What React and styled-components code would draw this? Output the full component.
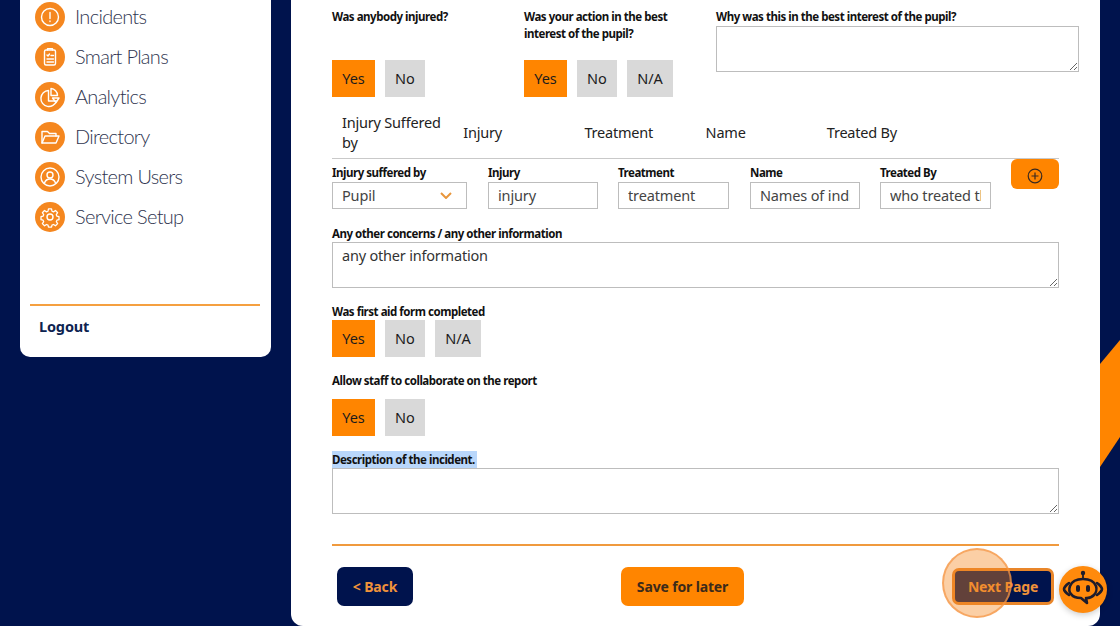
import React from 'react';
import styled, { createGlobalStyle } from 'styled-components';

const Global = createGlobalStyle`
  html, body { margin: 0; padding: 0; height: 626px; overflow: hidden; background: #00134d; }
  * { box-sizing: border-box; }
`;
const font = `"Noto Sans", "Liberation Sans", sans-serif`;
const Page = styled.div`
  position: relative; width: 1120px; height: 626px; overflow: hidden; background: #00134d;
  display: flex; align-items: flex-start; padding-left: 20px; gap: 20px; font-family: ${font};
`;
const Stripe = styled.svg`position: absolute; left: 1100px; top: 340px; width: 20px; height: 130px;`;
const Sidebar = styled.aside`
  width: 251px; height: 357px; background: #fff; border-radius: 0 0 10px 10px; padding: 0 11px 0 10px;
  display: flex; flex-direction: column;
`;
const Nav = styled.nav`display: flex; flex-direction: column; gap: 10px; height: 320px; border-bottom: 2px solid #f5a040; margin-top: -14px; padding-top: 16px; transform: none;`;
const NavItem = styled.a`
  display: flex; align-items: center; gap: 10px; height: 30px; padding-left: 5px; margin-top: ${p => p.$top || 0}px;
  font-family: Lato, sans-serif; font-weight: 300; font-size: 20px; letter-spacing: -0.7px; color: #2f3550;
`;
const NavText = styled.span`margin-top: -2px;`;
const IconDisc = styled.span`
  width: 30px; height: 30px; border-radius: 50%; background: #f5871f; display: flex; align-items: center; justify-content: center; flex: none;
  svg { width: 24px; height: 24px; fill: none; stroke: #fff; stroke-width: 1.4; stroke-linecap: round; stroke-linejoin: round; }
`;
const Logout = styled.a`font-size: 14.5px; font-weight: 700; color: #0d2350; padding: 10px 0 0 9px; line-height: 20px; letter-spacing: -0.15px;`;
const Main = styled.main`
  width: 809px; height: 626px; background: #fff; border-radius: 0 0 12px 12px; padding: 8px 41px 0; 
  display: flex; flex-direction: column; flex: none;
`;
const TopRow = styled.div`display: grid; grid-template-columns: 192px 192px 363px; height: 89px;`;
const Question = styled.div`display: flex; flex-direction: column; justify-content: space-between;`;
const Label = styled.label`
  display: block; font-size: 11.5px; font-weight: 700; line-height: 17px; color: #111; letter-spacing: -0.47px; white-space: nowrap;
`;
const SelLabel = styled(Label)`background: #b9d7fb; width: 145px;`;
const Choices = styled.div`display: flex; gap: 10px; margin-top: ${p => p.$top || 0}px;`;
const Choice = styled.button`
  height: 37px; width: ${p => p.$w}px; border: 0; padding: 0 0 2px; font-family: ${font}; font-size: 14.5px; color: #1c1c1c;
  background: ${p => (p.$on ? '#ff8500' : '#d9d9d9')};
`;
const Area = styled.textarea`
  display: block; width: 100%; height: ${p => p.$h || 46}px; border: 1px solid #bdbdbd; padding: 2px 9px; margin: ${p => p.$top || 0}px 0 0;
  font-family: ${font}; font-size: 14.5px; letter-spacing: -0.2px; color: #333; outline: 0; border-radius: 0; background: #fff;
`;
const TableHead = styled.div`
  display: grid; grid-template-columns: repeat(5, 121.2px); height: 54px; margin-top: 8px; border-bottom: 1px solid #c9c9c9; align-items: center;
`;
const HeadCell = styled.div`font-size: 14.5px; line-height: 20px; color: #222; padding: 0 10px; letter-spacing: -0.2px;`;
const EntryRow = styled.div`display: flex; align-items: flex-start; height: 51px;`;
const Field = styled.div`
  display: flex; flex-direction: column; width: ${p => p.$w}px; margin-left: ${p => p.$gap || 0}px; padding-top: 5px; row-gap: 1px;
`;
const Input = styled.input`
  width: 100%; height: 27px; border: 1px solid #bdbdbd; padding: 0 9px 2px; font-family: ${font}; font-size: 14.5px; letter-spacing: -0.15px; color: #444; background: #fff; outline: 0; border-radius: 0;
`;
const SelectBox = styled.div`
  height: 27px; border: 1px solid #bdbdbd; padding: 0 9px 2px; font-size: 14.5px; color: #444; letter-spacing: -0.15px; display: flex; align-items: center; justify-content: space-between;
  svg { width: 12px; height: 7px; margin-right: 5px; margin-top: 2px; fill: none; stroke: #e8963c; stroke-width: 2; }
`;
const AddButton = styled.button`
  width: 48px; height: 30px; margin-left: 20px; border: 0; border-radius: 6px; background: #ff8500; padding: 7px 0 0;
  svg { width: 16px; height: 16px; fill: none; stroke: #3a2a20; stroke-width: 1.2; }
`;
const Block = styled.section`margin-top: ${p => p.$top}px;`;
const Rule = styled.hr`margin: 30px 0 0; border: 0; height: 2px; background: #f09a3e;`;
const Footer = styled.div`display: flex; justify-content: space-between; align-items: center; padding: 21px 5px 0; height: 60px;`;
const Action = styled.button`
  height: ${p => p.$h || 39}px; width: ${p => p.$w}px; border-radius: 7px; font-family: ${font}; font-weight: 700; font-size: 14px; letter-spacing: -0.15px; padding: 0;
  background: ${p => (p.$light ? '#ff8500' : '#00134d')};
  color: ${p => (p.$light ? '#3c2a1a' : '#f0923a')};
  border: ${p => (p.$border ? '3px solid #e9862a' : '0')};
`;
const Ripple = styled.span`
  position: absolute; left: 942px; top: 548px; width: 70px; height: 70px; border-radius: 50%;
  background: rgba(245, 135, 31, .4); border: 2px solid rgba(245,150,70,.7); pointer-events: none;
`;
const Bot = styled.span`
  position: absolute; left: 1059px; top: 566px; width: 48px; height: 47px; border-radius: 50%; background: #ff8a0c;
  display: flex; align-items: center; justify-content: center; box-shadow: 0 2px 6px rgba(0,0,0,.2);
  svg { width: 48px; height: 47px; }
`;

const icons = {
  alert: <><circle cx="12" cy="12" r="8.5" /><path d="M12 7.5v6M12 16v.6" /></>,
  plan: <><rect x="6.5" y="5" width="11" height="15" rx="1.5" /><path d="M9.5 5V3.8h5V5M9 10l1 1 1.5-2M13 10.5h2.5M9 14h6.5M9 17h6.5" /></>,
  pie: <><path d="M10.5 5.5a8 8 0 1 0 8 10.5h-8z" /><path d="M13 3.5a7 7 0 0 1 6.5 7H13z" /><path d="M14.5 13H21l-3 4.5z" /></>,
  folder: <><path d="M4 18V6.5h5.5l2 2H18V11" /><path d="M4 18l3-7h14l-3 7z" /></>,
  user: <><circle cx="12" cy="12" r="9" /><circle cx="12" cy="10" r="3" /><path d="M6.5 18c1-3 3-4 5.500-4s4.500 1 5.500 4" /></>,
  gear: <><circle cx="12" cy="12" r="3" /><path d="M10.300 3h3.400l.5 2.600 1.700.7 2.200-1.500 2.400 2.400-1.500 2.200.7 1.700 2.300.5v3.400l-2.300.5-.7 1.700 1.500 2.200-2.400 2.400-2.200-1.500-1.700.7-.5 2.300h-3.400l-.5-2.300-1.700-.7-2.200 1.500-2.400-2.400 1.500-2.200-.7-1.700-2.300-.5v-3.400l2.300-.5.7-1.700-1.500-2.200 2.400-2.400 2.200 1.500 1.700-.7z" transform="translate(1.200 1.200) scale(.9)" /></>,
};
const navItems = [['alert', 'Incidents'], ['plan', 'Smart Plans'], ['pie', 'Analytics'], ['folder', 'Directory'], ['user', 'System Users'], ['gear', 'Service Setup']];
const heads = ['Injury Suffered by', 'Injury', 'Treatment', 'Name', 'Treated By'];
const YesNo = ({ na, top }) => (
  <Choices $top={top}>
    <Choice $w={43} $on>Yes</Choice>
    <Choice $w={40}>No</Choice>
    {na && <Choice $w={46}>N/A</Choice>}
  </Choices>
);

export default function App() {
  return (
    <Page>
      <Global />
      <Stripe viewBox="0 0 20 130" preserveAspectRatio="none"><polygon points="0,24 20,0 20,97 0,127" fill="#ff8500" /></Stripe>
      <Sidebar>
        <Nav>
          {navItems.map(([k, t]) => (
            <NavItem key={t}>
              <IconDisc><svg viewBox="0 0 24 24">{icons[k]}</svg></IconDisc><NavText>{t}</NavText>
            </NavItem>
          ))}
        </Nav>
        <Logout>Logout</Logout>
      </Sidebar>
      <Main>
        <TopRow>
          <Question><Label>Was anybody injured?</Label><YesNo /></Question>
          <Question><Label>Was your action in the best<br />interest of the pupil?</Label><YesNo na /></Question>
          <div>
            <Label>Why was this in the best interest of the pupil?</Label>
            <Area $h={46} $top={1} />
          </div>
        </TopRow>
        <TableHead>{heads.map(h => <HeadCell key={h}>{h}</HeadCell>)}</TableHead>
        <EntryRow>
          <Field $w={135}><Label>Injury suffered by</Label>
            <SelectBox>Pupil<svg viewBox="0 0 12 7"><path d="M1 1l5 5 5-5" /></svg></SelectBox>
          </Field>
          <Field $w={110} $gap={21}><Label>Injury</Label><Input defaultValue="injury" /></Field>
          <Field $w={111} $gap={20}><Label>Treatment</Label><Input defaultValue="treatment" /></Field>
          <Field $w={110} $gap={21}><Label>Name</Label><Input defaultValue="Names of individuals" /></Field>
          <Field $w={111} $gap={20}><Label>Treated By</Label><Input defaultValue="who treated them" /></Field>
          <AddButton><svg viewBox="0 0 16 16"><circle cx="8" cy="8" r="6.800" /><path d="M8 4.500v7M4.500 8h7" /></svg></AddButton>
        </EntryRow>
        <Block $top={15}>
          <Label>Any other concerns / any other information</Label>
          <Area $h={46} defaultValue="any other information" />
        </Block>
        <Block $top={15}>
          <Label>Was first aid form completed</Label>
          <YesNo na />
        </Block>
        <Block $top={15}>
          <Label>Allow staff to collaborate on the report</Label>
          <YesNo top={10} />
        </Block>
        <Block $top={15}>
          <SelLabel>Description of the incident.</SelLabel>
          <Area $h={46} />
        </Block>
        <Rule />
        <Footer>
          <Action $w={76}>&lt; Back</Action>
          <Action $w={123} $light>Save for later</Action>
          <Action $w={102} $h={37} $border>Next Page</Action>
        </Footer>
      </Main>
      <Ripple />
      <Bot>
        <svg viewBox="0 0 48 47">
          <circle cx="24" cy="7" r="2.200" fill="#1c1c2c" />
          <path d="M24 8v5" stroke="#1c1c2c" strokeWidth="1.800" />
          <path d="M11 20c2-5 7-7 13-7s11 2 13 7c1 3 0 7-2 9-2 2-5 3-7 3h-1l1 5-6-5c-4 0-8-1-10-4-2-2-2-5-1-8z" fill="#ff8a0c" stroke="#1c1c2c" strokeWidth="2.600" strokeLinejoin="round" />
          <path d="M10 17c-3 2-5 5-5 6s2 4 5 6M38 17c3 2 5 5 5 6s-2 4-5 6" fill="none" stroke="#1c1c2c" strokeWidth="2.600" strokeLinecap="round" />
          <rect x="17" y="19" width="4" height="7" rx="2" fill="#1c1c2c" />
          <rect x="27" y="19" width="4" height="7" rx="2" fill="#1c1c2c" />
        </svg>
      </Bot>
    </Page>
  );
}
